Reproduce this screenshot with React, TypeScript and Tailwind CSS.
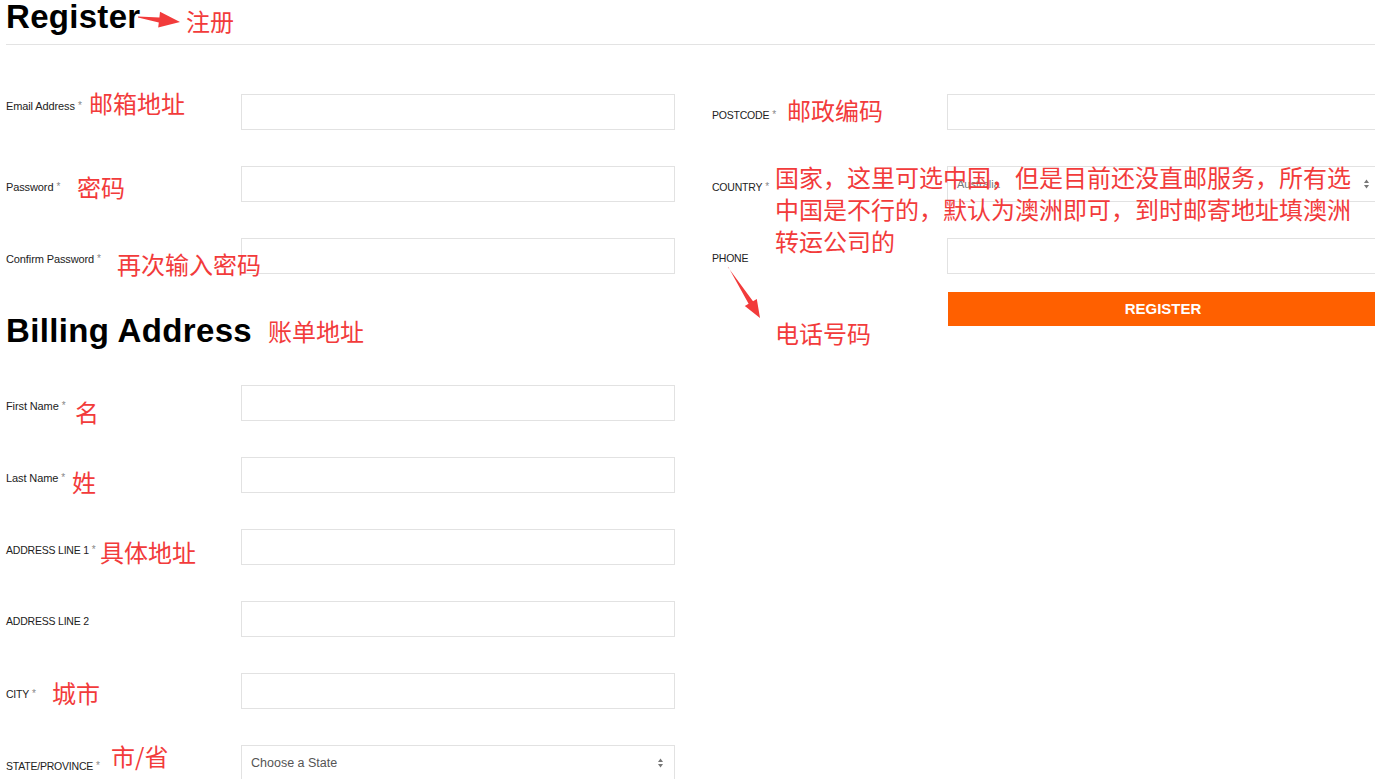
import React from "react";

type Field = { label: string; req?: boolean; upper?: boolean; select?: string; lift?: boolean };

const leftTop: Field[] = [
  { label: "Email Address", req: true, lift: true },
  { label: "Password", req: true },
  { label: "Confirm Password", req: true },
];

const billing: Field[] = [
  { label: "First Name", req: true },
  { label: "Last Name", req: true },
  { label: "ADDRESS LINE 1", req: true, upper: true },
  { label: "ADDRESS LINE 2", upper: true },
  { label: "CITY", req: true, upper: true },
  { label: "STATE/PROVINCE", req: true, upper: true, select: "Choose a State" },
];

const right: Field[] = [
  { label: "POSTCODE", req: true, upper: true },
  { label: "COUNTRY", req: true, upper: true, select: "Australia" },
  { label: "PHONE", upper: true },
];

const Arrows = () => (
  <svg width="7" height="11" viewBox="0 0 7 11" className="absolute right-[10px] top-1/2 -translate-y-1/2">
    <path d="M3.5 1 L6 4.5 L1 4.5 Z" fill="#777" />
    <path d="M3.5 10 L6 6.5 L1 6.5 Z" fill="#777" />
  </svg>
);

const Row = ({ f, first, country }: { f: Field; first?: boolean; country?: boolean }) => (
  <div className={`flex items-center h-[36px] ${first ? "" : "mt-[36px]"}`}>
    <div
      className={`w-[235px] shrink-0 text-[#222] ${f.lift ? "pb-[12px]" : "pt-[6px]"} ${
        f.upper ? "text-[10.5px] tracking-[-0.02em]" : "text-[11px] tracking-[-0.01em]"
      }`}
    >
      {f.label}
      {f.req && <span className="text-[#888] text-[10px] ml-[3px] align-[1px]">*</span>}
    </div>
    <div className="relative w-[434px] h-[36px] shrink-0 border border-[#e2e2e2] bg-white">
      {f.select && (
        <>
          <span
            className={`absolute top-1/2 -translate-y-1/2 left-[9px] ${
              country ? "text-[11px] text-[#777]" : "text-[12.5px] text-[#555]"
            }`}
          >
            {f.select}
          </span>
          <Arrows />
        </>
      )}
    </div>
  </div>
);

const notes: { t: string; x: number; y: number }[] = [
  { t: "注册", x: 186, y: 9 },
  { t: "邮箱地址", x: 89, y: 91 },
  { t: "密码", x: 77, y: 175 },
  { t: "再次输入密码", x: 117, y: 252 },
  { t: "账单地址", x: 268, y: 319 },
  { t: "名", x: 75, y: 400 },
  { t: "姓", x: 72, y: 470 },
  { t: "具体地址", x: 100, y: 540 },
  { t: "城市", x: 52, y: 681 },
  { t: "市/省", x: 111, y: 744 },
  { t: "邮政编码", x: 787, y: 98 },
  { t: "电话号码", x: 775, y: 321 },
];

export default function App() {
  return (
    <div className="relative w-[1375px] h-[779px] overflow-hidden bg-white font-['Liberation_Sans',Arial,sans-serif]">
      <div className="pl-[6px] w-[1381px]">
        <h1 className="text-[33px] font-bold leading-none text-black tracking-[0.3px]">Register</h1>
        <div className="mt-[11px] h-px bg-[#e3e3e3]" />
        <div className="flex mt-[49px]">
          <div className="w-[669px] shrink-0">
            {leftTop.map((f, i) => (
              <Row key={f.label} f={f} first={i === 0} />
            ))}
            <h2 className="mt-[40px] text-[33px] font-bold leading-none text-black tracking-[0.35px]">
              Billing Address
            </h2>
            <div className="mt-[38px]">
              {billing.map((f, i) => (
                <Row key={f.label} f={f} first={i === 0} />
              ))}
            </div>
          </div>
          <div className="ml-[37px] w-[669px] shrink-0">
            {right.map((f, i) => (
              <Row key={f.label} f={f} first={i === 0} country={f.label === "COUNTRY"} />
            ))}
            <button className="mt-[18px] ml-[236px] w-[430px] h-[34px] bg-[#ff6000] text-white font-bold text-[15px]">
              REGISTER
            </button>
          </div>
        </div>
      </div>

      {/* red annotations laid over the form */}
      <div className="absolute inset-0 pointer-events-none font-['Noto_Sans_CJK_SC',sans-serif] text-[#f23b3b]">
        {notes.map((n) => (
          <div
            key={n.t}
            className="absolute text-[24px] leading-[24px] whitespace-nowrap"
            style={{ left: n.x, top: n.y }}
          >
            {n.t}
          </div>
        ))}
        <div className="absolute left-[775px] top-[161px] text-[24px] leading-[32px] whitespace-nowrap">
          国家，这里可选中国，但是目前还没直邮服务，所有选
          <br />
          中国是不行的，默认为澳洲即可，到时邮寄地址填澳洲
          <br />
          转运公司的
        </div>
        <svg className="absolute left-0 top-0" width="1375" height="779">
          <polygon
            points="138,16.5 159.4,17.4 160,11.8 180,22 158.2,27.6 158.8,22.4 138,17.6"
            fill="#f23b3b"
          />
          <polygon
            points="727.6,266.8 753,301.2 756.8,298.9 760,318 744.8,306.1 748.6,303.8 728.4,267.2"
            fill="#f23b3b"
          />
        </svg>
      </div>
    </div>
  );
}
